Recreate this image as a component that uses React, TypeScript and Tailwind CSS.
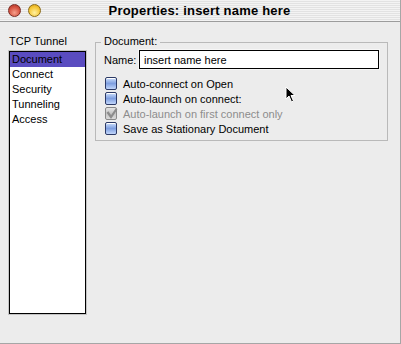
import React from 'react';

const font = { fontFamily: '"Liberation Sans", Arial, sans-serif' };

function Checkbox({ checked, disabled }: { checked?: boolean; disabled?: boolean }) {
  if (disabled) {
    return (
      <span className="relative w-[12px] h-[13px] rounded-[2px] border border-[#8a8a8a] bg-gradient-to-b from-[#e4e4e4] via-[#c4c4c4] to-[#dadada] flex items-center justify-center">
        {checked && (
          <svg width="12" height="12" viewBox="0 0 12 12" className="absolute -top-[1px] left-0">
            <path d="M1.5 5 L5 10 L10.5 2" fill="none" stroke="#8c8c8c" strokeWidth="2.2" />
          </svg>
        )}
      </span>
    );
  }
  return (
    <span className="w-[12px] h-[13px] rounded-[2px] border border-[#2c3a66] bg-gradient-to-b from-[#cfe0fb] via-[#7f9fe0] to-[#c2d6fa] shadow-[inset_0_1px_0_#ffffff]" />
  );
}

function Row({ label, checked, disabled }: { label: string; checked?: boolean; disabled?: boolean }) {
  return (
    <div className="h-[15px] flex items-center gap-[6px]">
      <Checkbox checked={checked} disabled={disabled} />
      <span className={disabled ? 'text-[#8c8c8c]' : 'text-black'}>{label}</span>
    </div>
  );
}

export default function App() {
  const items = ['Document', 'Connect', 'Security', 'Tunneling', 'Access'];

  return (
    <div className="w-[401px] h-[344px] bg-[#ececec] border-r border-b border-[#a6a6a6] flex flex-col text-[11px] leading-[14px] text-black relative overflow-hidden" style={font}>
      {/* title bar */}
      <div className="h-[22px] shrink-0 flex items-center border-b border-[#9c9c9c] bg-[repeating-linear-gradient(180deg,#f3f3f3_0px,#f3f3f3_1px,#e2e2e2_1px,#e2e2e2_2px)] relative">
        <div className="flex items-center gap-[7px] pl-[8px]">
          <span className="w-[13px] h-[13px] rounded-full border border-[#7a2a22] bg-[radial-gradient(circle_at_50%_70%,#f6a08c,#d4503e_60%,#a8372a)]" />
          <span className="w-[13px] h-[13px] rounded-full border border-[#8a6a14] bg-[radial-gradient(circle_at_50%_70%,#fff0a0,#f5c634_60%,#d49a18)]" />
        </div>
        <div className="flex-1 text-center font-bold text-[13px] pr-[42px] tracking-[0.2px]">Properties: insert name here</div>
      </div>

      <div className="flex flex-1 pl-[9px] pt-[12px]">
        {/* left column */}
        <div className="w-[77px] flex flex-col">
          <div className="h-[14px] leading-[14px]">TCP Tunnel</div>
          <div className="mt-[3px] h-[263px] bg-white border border-black outline outline-1 outline-[#c4c4c4] flex flex-col">
            {items.map((it, i) => (
              <div
                key={it}
                className={
                  'h-[15px] leading-[15px] pl-[2px] ' +
                  (i === 0 ? 'bg-[#5a4cc0] text-black' : '')
                }
              >
                {it}
              </div>
            ))}
          </div>
        </div>

        {/* right group */}
        <div className="ml-[9px] mt-[8px] w-[293px] h-[99px] border border-[#b9b9b9] relative px-[8px] pt-[7px]">
          <span className="absolute -top-[9px] left-[5px] px-[3px] bg-[#ececec] leading-[14px]">Document:</span>
          <div className="flex items-center">
            <span className="w-[35px]">Name:</span>
            <div className="h-[19px] flex-1 bg-white border border-black outline outline-1 outline-[#f6f6f6] flex items-center px-[4px]">
              insert name here
            </div>
          </div>
          <div className="mt-[7px] pl-[1px] flex flex-col">
            <Row label="Auto-connect on Open" />
            <Row label="Auto-launch on connect:" />
            <Row label="Auto-launch on first connect only" checked disabled />
            <Row label="Save as Stationary Document" />
          </div>
        </div>
      </div>

      {/* mouse pointer */}
      <svg className="absolute left-[285px] top-[86px]" width="12" height="18" viewBox="0 0 12 18">
        <path d="M1 1 L1 13 L4 10 L6.5 16 L8.5 15 L6 9.5 L10 9.5 Z" fill="#000" stroke="#fff" strokeWidth="1" />
      </svg>
    </div>
  );
}
